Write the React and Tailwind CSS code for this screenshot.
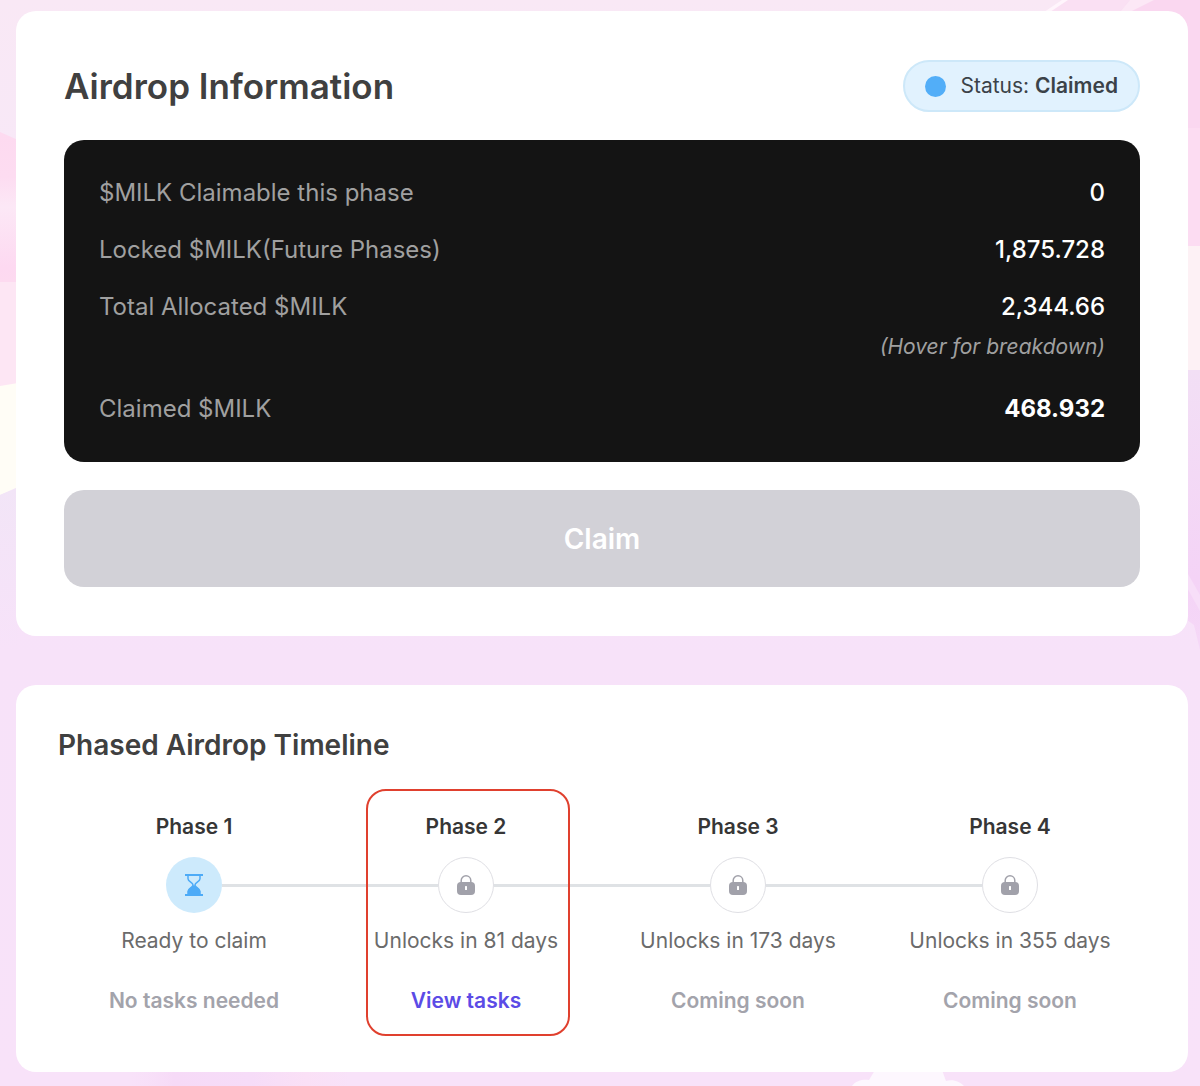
import React from "react";

const balances = [
  { label: "$MILK Claimable this phase", value: "0" },
  { label: "Locked $MILK(Future Phases)", value: "1,875.728" },
  {
    label: "Total Allocated $MILK",
    value: "2,344.66",
    hint: "(Hover for breakdown)",
  },
  { label: "Claimed $MILK", value: "468.932", strong: true },
];

const phases = [
  { name: "Phase 1", status: "Ready to claim", task: "No tasks needed", open: true },
  {
    name: "Phase 2",
    status: "Unlocks in 81 days",
    task: "View tasks",
    link: "#tasks",
    highlighted: true,
  },
  { name: "Phase 3", status: "Unlocks in 173 days", task: "Coming soon" },
  { name: "Phase 4", status: "Unlocks in 355 days", task: "Coming soon" },
];

const HourglassIcon = () => (
  <svg viewBox="0 0 18 22" className="h-[22px] w-[18px]" aria-hidden="true">
    <path
      d="M3 1.5v3.2C3 7.6 8 8.6 8 11s-5 3.4-5 6.300v3.2M15 1.5v3.2C15 7.6 10 8.6 10 11s5 3.4 5 6.3v3.2"
      fill="none"
      stroke="#4dabf7"
      strokeWidth="1.5"
    />
    <path d="M9 10.5c.8 2 6 3.5 6 7v3H3v-3c0-3.500 5.2-5 6-7z" fill="#4dabf7" />
    <path d="M0 0h18v2H0zM0 20h18v2H0z" fill="#4dabf7" />
  </svg>
);

const LockIcon = () => (
  <svg viewBox="0 0 18 20" className="h-5 w-[18px]" aria-hidden="true">
    <path
      d="M4.200 8V5.600C4.200 2.900 6.200.8 9 .8s4.800 2.100 4.800 4.800V8"
      fill="none"
      stroke="#a1a1aa"
      strokeWidth="1.5"
    />
    <rect y="7" width="18" height="13" rx="4" fill="#a1a1aa" />
    <rect x="8" y="11" width="2" height="4" rx="0.5" fill="#fff" />
  </svg>
);

// Soft pastel shapes that show around the edges of the cards
const Backdrop = () => (
  <svg
    viewBox="0 0 1200 1086"
    preserveAspectRatio="none"
    className="absolute inset-0 h-full w-full"
    aria-hidden="true"
  >
    <defs>
      <linearGradient id="sky" x1="0" y1="0" x2="0" y2="1">
        <stop offset="0" stopColor="#f9e8f5" />
        <stop offset="0.2" stopColor="#f7e8f8" />
        <stop offset="0.6" stopColor="#f7e2f9" />
        <stop offset="1" stopColor="#f8e2f9" />
      </linearGradient>
      <linearGradient id="petal" x1="0" y1="0" x2="0" y2="1">
        <stop offset="0" stopColor="#fddaf0" />
        <stop offset="0.3" stopColor="#fddcf1" />
        <stop offset="0.5" stopColor="#fce8f6" />
        <stop offset="0.9" stopColor="#fdd9f1" />
        <stop offset="1" stopColor="#fddaf0" />
      </linearGradient>
      <linearGradient id="lilac" x1="0" y1="0" x2="0" y2="1">
        <stop offset="0" stopColor="#f2dff5" />
        <stop offset="0.75" stopColor="#f4d3f6" />
        <stop offset="1" stopColor="#f5d8f7" />
      </linearGradient>
      <linearGradient id="mist" x1="0" y1="0" x2="0" y2="1">
        <stop offset="0" stopColor="#f2e5f7" />
        <stop offset="1" stopColor="#f7e2f9" />
      </linearGradient>
      <linearGradient id="glow" x1="0" y1="0" x2="1" y2="0">
        <stop offset="0" stopColor="#f8def8" stopOpacity="0" />
        <stop offset="0.2" stopColor="#f6daf7" />
        <stop offset="0.55" stopColor="#f6dcf8" />
        <stop offset="0.8" stopColor="#fae0f6" />
        <stop offset="1" stopColor="#f8e2f9" />
      </linearGradient>
    </defs>
    <rect width="1200" height="1086" fill="url(#sky)" />
    <path d="M0 132l18 8v142H0z" fill="url(#petal)" />
    <path d="M0 282h18v104H0z" fill="#fde6f4" />
    <path d="M0 386l18-3v105l-18 7z" fill="#fffdf6" />
    <path d="M0 495l18-8v163H0z" fill="url(#mist)" />
    <path d="M1064 0h66l-10 12h-76z" fill="#fae0f3" />
    <path d="M1062 0l-18 12h6l18-12z" fill="#fff5fc" />
    <path d="M1130 0h70v130h-20V20l-60-8z" fill="#fad7f0" />
    <path d="M1130 0h24l-24 12h-10z" fill="#fce8f6" />
    <path d="M1180 128h20v118h-20z" fill="#fcdcf2" />
    <path d="M1180 246h20v124h-20z" fill="#fdf1f5" />
    <path d="M1180 370h20v280l-6-25-14-10z" fill="url(#lilac)" />
    <path d="M1180 560l20 35v16l-20-36z" fill="#f7def8" />
    <path d="M130 1070h220v16H130z" fill="url(#glow)" />
    <path
      d="M852 1086c4-6 12-7 17-6l6-10h67l4 11c8-2 14 1 18 5z"
      fill="#fdf7fe"
    />
  </svg>
);

const StatusBadge = () => (
  <div className="flex h-[52px] items-center gap-3.5 rounded-full border-2 border-[#cde8f9] bg-[#e1f2fe] px-5 text-[21px] text-[#3b4248]">
    <span className="h-[21px] w-[21px] rounded-full bg-[#52aef8]"></span>
    <span>
      Status: <strong className="font-semibold">Claimed</strong>
    </span>
  </div>
);

const Phase = ({ phase, first, last }) => (
  <li className="relative flex flex-col items-center pt-[22px] pb-[19px] text-[21px] leading-8">
    <h3 className="font-semibold text-[#363636]">{phase.name}</h3>
    <div className="mt-3.5 flex w-full items-center">
      <span className={`h-[3px] flex-1 ${first ? "" : "bg-[#dfe2e5]"}`}></span>
      {phase.open ? (
        <span className="flex h-14 w-14 items-center justify-center rounded-full bg-[#cdeafc]">
          <HourglassIcon />
        </span>
      ) : (
        <span className="flex h-14 w-14 items-center justify-center rounded-full border border-[#dfdfe4] bg-white">
          <LockIcon />
        </span>
      )}
      <span className={`h-[3px] flex-1 ${last ? "" : "bg-[#dfe2e5]"}`}></span>
    </div>
    <p className="mt-3 text-[#6b6b6b]">{phase.status}</p>
    {phase.link ? (
      <a href={phase.link} className="mt-7 font-semibold text-[#5b4be6]">
        {phase.task}
      </a>
    ) : (
      <p className="mt-7 font-semibold text-[#a3a3ab]">{phase.task}</p>
    )}
    {phase.highlighted && (
      <span className="pointer-events-none absolute inset-y-0 right-8 left-9 rounded-[20px] border-2 border-[#e0402e]"></span>
    )}
  </li>
);

const App = () => {
  return (
    <div className="relative min-h-screen font-[Inter,sans-serif]">
      <Backdrop />
      <main className="relative flex flex-col gap-[49px] pt-[11px] pr-3 pb-3.5 pl-4">
        <section className="rounded-[20px] bg-white px-12 py-[49px]">
          <div className="flex items-center justify-between">
            <h1 className="text-[35px] leading-[50px] font-semibold text-[#404040]">
              Airdrop Information
            </h1>
            <StatusBadge />
          </div>

          <dl className="mt-7 flex flex-col gap-[21px] rounded-[20px] bg-[#141414] p-[35px] text-[24px] leading-9">
            {balances.map((row) => (
              <div key={row.label} className="flex justify-between">
                <dt className="text-[#a0a0a0]">{row.label}</dt>
                <dd
                  className={`text-right text-white ${
                    row.strong ? "font-bold" : "font-medium"
                  }`}
                >
                  {row.value}
                  {row.hint && (
                    <p className="mt-1 mb-[5px] text-[21px] leading-9 font-normal text-[#a0a0a0] italic">
                      {row.hint}
                    </p>
                  )}
                </dd>
              </div>
            ))}
          </dl>

          <button
            type="button"
            disabled
            className="mt-7 h-[97px] w-full rounded-[20px] bg-[#d2d1d7] text-[28px] font-semibold text-white"
          >
            Claim
          </button>
        </section>

        <section className="rounded-[20px] bg-white px-[42px] pt-[42px] pb-9">
          <h2 className="text-[28px] leading-9 font-semibold text-[#404040]">
            Phased Airdrop Timeline
          </h2>
          <ol className="mt-[26px] grid grid-cols-4">
            {phases.map((phase, index) => (
              <Phase
                key={phase.name}
                phase={phase}
                first={index === 0}
                last={index === phases.length - 1}
              />
            ))}
          </ol>
        </section>
      </main>
    </div>
  );
};

export default App;
